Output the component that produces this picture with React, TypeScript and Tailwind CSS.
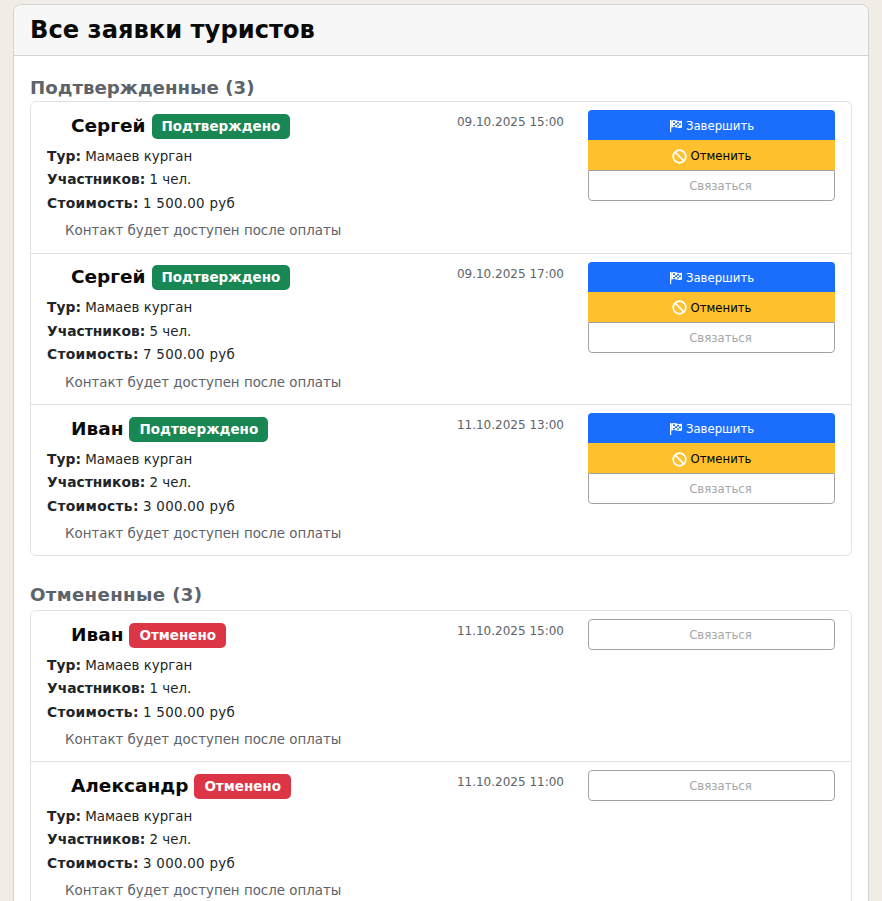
import React from 'react';

type Booking = {
  name: string;
  date: string;
  people: number;
  price: string;
};

const confirmed: Booking[] = [
  { name: 'Сергей', date: '09.10.2025 15:00', people: 1, price: '1 500.00' },
  { name: 'Сергей', date: '09.10.2025 17:00', people: 5, price: '7 500.00' },
  { name: 'Иван', date: '11.10.2025 13:00', people: 2, price: '3 000.00' },
];

const cancelled: Booking[] = [
  { name: 'Иван', date: '11.10.2025 15:00', people: 1, price: '1 500.00' },
  { name: 'Александр', date: '11.10.2025 11:00', people: 2, price: '3 000.00' },
];

// checkered flag, drawn as a pole and a grid of squares
const FlagIcon = () => (
  <svg width="14" height="14" viewBox="0 0 14 14" fill="currentColor" className="shrink-0">
    <rect x="1" y="1" width="1.2" height="12" />
    <path d="M2.2 1.6 C4 0.8 6 0.9 7.5 1.6 C9 2.2 11 2.2 13 1.5 V8.4 C11 9.1 9 9.1 7.5 8.5 C6 7.8 4 7.8 2.2 8.6 Z" />
    <rect x="4" y="2.4" width="2" height="1.7" fill="#1b6efd" />
    <rect x="8" y="2.8" width="2" height="1.7" fill="#1b6efd" />
    <rect x="6" y="4.3" width="2" height="1.7" fill="#1b6efd" />
    <rect x="10" y="4.5" width="2" height="1.7" fill="#1b6efd" />
    <rect x="4" y="6" width="2" height="1.3" fill="#1b6efd" />
    <rect x="8" y="6.3" width="2" height="1.4" fill="#1b6efd" />
  </svg>
);

const BanIcon = () => (
  <svg width="15" height="15" viewBox="0 0 14 14" fill="none" stroke="white" strokeWidth="1.6" className="shrink-0">
    <circle cx="7" cy="7" r="5.9" />
    <path d="M2.9 2.9 L11.1 11.1" />
  </svg>
);

const BookingRow = ({ item, status, rowClass }: { item: Booking; status: 'ok' | 'cancel'; rowClass: string }) => (
  <div className={`flex pl-4 pr-4 pt-2 ${rowClass}`}>
    <div className="flex-1 min-w-0">
      <div className="flex items-center pl-6 h-[30px] pt-[2px]">
        <span className="text-[18.5px] font-bold text-[#0a0a0a] leading-none">{item.name}</span>
        {status === 'ok' ? (
          <span className="ml-[6px] h-[25px] px-[10px] flex items-center rounded-[5px] bg-[#198754] text-white text-[13.5px] font-bold">Подтверждено</span>
        ) : (
          <span className="ml-[6px] h-[25px] px-[10px] flex items-center rounded-[5px] bg-[#dc3545] text-white text-[13.5px] font-bold">Отменено</span>
        )}
      </div>
      <div className="mt-[4.7px] flex flex-col text-[13.4px] text-[#212529]">
        <p className="h-[23.5px] leading-[23.5px]"><b className="text-[13.85px]">Тур:</b> Мамаев курган</p>
        <p className="h-[23.5px] leading-[23.5px]"><b className="text-[13.85px]">Участников:</b> {item.people} чел.</p>
        <p className="h-[23.5px] leading-[23.5px]"><b className="text-[13.85px] tracking-[0.3px]">Стоимость:</b> <span className="tracking-[0.28px]">{item.price} руб</span></p>
      </div>
      <p className="mt-[3.8px] pl-[18px] text-[13.4px] leading-[24px] text-[#5c636a]">Контакт будет доступен после оплаты</p>
    </div>
    <div className="flex">
      <span className="text-[12px] leading-[24px] text-[#5c636a]">{item.date}</span>
      <div className="ml-6 w-[247px] flex flex-col text-[13px]" style={{ fontFamily: '"DejaVu Sans Condensed", "DejaVu Sans", sans-serif' }}>
        {status === 'ok' && (
          <>
            <button className="h-[30px] pt-[2px] flex items-center justify-center gap-[3px] rounded-t bg-[#1b6efd] text-white"><FlagIcon />Завершить</button>
            <button className="h-[30px] pt-[2px] flex items-center justify-center gap-[4px] bg-[#ffc02d] text-black"><BanIcon />Отменить</button>
          </>
        )}
        <button className={`h-[31px] pt-[1px] pl-[18px] flex items-center justify-center border border-[#a3a3a3] bg-white text-[#a5a8ab] ${status === 'ok' ? 'rounded-b' : 'rounded'}`}>Связаться</button>
      </div>
    </div>
  </div>
);

export default function App() {
  return (
    <div className="h-screen overflow-hidden bg-[#f1ede6] px-[13px] pt-[4px]" style={{ fontFamily: '"DejaVu Sans", sans-serif' }}>
      <div className="rounded-t-lg border border-[#d3d3d3] bg-white">
        <div className="h-[51px] pt-[1px] flex items-center px-4 bg-[#f7f7f7] border-b border-[#d3d3d3] rounded-t-lg">
          <h1 className="text-[24.2px] font-bold text-[#0a0a0a]">Все заявки туристов</h1>
        </div>
        <div className="px-4 pt-[19px]">
          <h2 className="text-[18.2px] font-bold leading-[26px] text-[#5c636a]">Подтвержденные (3)</h2>
          <div className="rounded-md border border-[#dee2e6]">
            <BookingRow item={confirmed[0]} status="ok" rowClass="h-[151.6px] border-b border-[#dee2e6]" />
            <BookingRow item={confirmed[1]} status="ok" rowClass="h-[151.6px] border-b border-[#dee2e6]" />
            <BookingRow item={confirmed[2]} status="ok" rowClass="h-[150px]" />
          </div>
          <h2 className="mt-[26px] mb-[2px] text-[18.2px] tracking-[0.35px] font-bold leading-[26px] text-[#5c636a]">Отмененные (3)</h2>
          <div className="rounded-md border border-[#dee2e6]">
            {cancelled.map((item, i) => (
              <BookingRow key={i} item={item} status="cancel" rowClass="h-[151px] border-b border-[#dee2e6]" />
            ))}
          </div>
        </div>
      </div>
    </div>
  );
}
